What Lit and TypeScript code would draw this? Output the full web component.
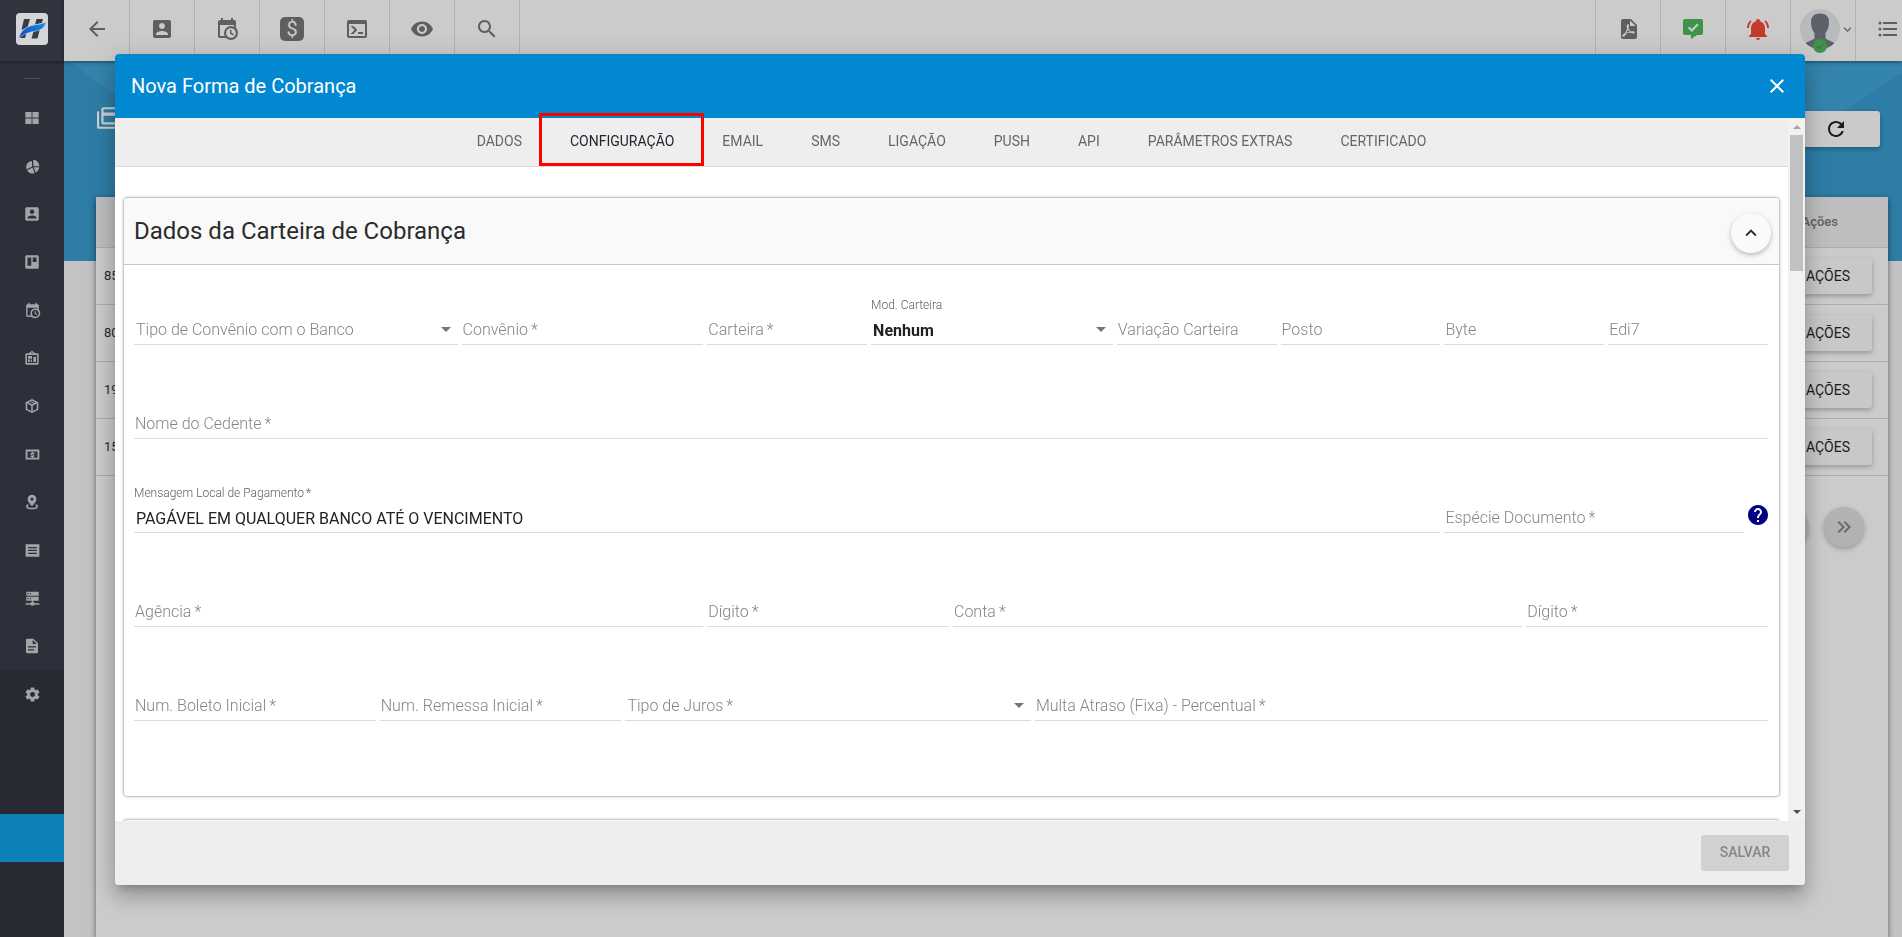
import { LitElement, html, css, nothing } from "lit";
import { customElement, property, state } from "lit/decorators.js";
import { classMap } from "lit/directives/class-map.js";
import { styleMap } from "lit/directives/style-map.js";

const ICONS: Record<string, string> = {
  back: "M20 11H7.83l5.59-5.59L12 4l-8 8 8 8 1.41-1.41L7.83 13H20v-2z",
  account:
    "M3 5v14c0 1.1.89 2 2 2h14c1.1 0 2-.9 2-2V5c0-1.1-.9-2-2-2H5c-1.11 0-2 .9-2 2zm12 4c0 1.66-1.34 3-3 3s-3-1.34-3-3 1.34-3 3-3 3 1.34 3 3zm-9 8c0-2 4-3.1 6-3.1s6 1.1 6 3.1v1H6v-1z",
  calendar:
    "M15,13H16.5V15.82L18.94,17.23L18.19,18.53L15,16.69V13M19,8H5V19H9.67C9.24,18.09 9,17.07 9,16A7,7 0 0,1 16,9C17.07,9 18.09,9.24 19,9.67V8M5,21C3.89,21 3,20.1 3,19V5C3,3.89 3.89,3 5,3H6V1H8V3H16V1H18V3H19A2,2 0 0,1 21,5V11.1C22.24,12.36 23,14.09 23,16A7,7 0 0,1 16,23C14.09,23 12.36,22.24 11.1,21H5M16,11.15A4.85,4.85 0 0,0 11.15,16C11.15,18.68 13.32,20.85 16,20.85A4.85,4.85 0 0,0 20.85,16C20.85,13.32 18.68,11.15 16,11.15Z",
  console:
    "M20,19V7H4V19H20M20,3A2,2 0 0,1 22,5V19A2,2 0 0,1 20,21H4A2,2 0 0,1 2,19V5C2,3.89 2.9,3 4,3H20M13,17V15H18V17H13M9.58,13L5.57,9H8.4L11.7,12.3C12.09,12.69 12.09,13.33 11.7,13.72L8.42,17H5.59L9.58,13Z",
  eye: "M12 4.5C7 4.5 2.73 7.61 1 12c1.73 4.39 6 7.5 11 7.5s9.27-3.11 11-7.5c-1.73-4.39-6-7.5-11-7.5zM12 17c-2.76 0-5-2.24-5-5s2.24-5 5-5 5 2.24 5 5-2.24 5-5 5zm0-8c-1.66 0-3 1.34-3 3s1.34 3 3 3 3-1.34 3-3-1.34-3-3-3z",
  search:
    "M15.5 14h-.79l-.28-.27C15.41 12.59 16 11.11 16 9.5 16 5.91 13.09 3 9.5 3S3 5.91 3 9.5 5.91 16 9.5 16c1.61 0 3.09-.59 4.23-1.57l.27.28v.79l5 4.99L20.49 19l-4.99-5zm-6 0C7.01 14 5 11.99 5 9.5S7.01 5 9.5 5 14 7.01 14 9.5 11.99 14 9.5 14z",
  pdf: "M14,9H19.5L14,3.5V9M7,2H15L21,8V20A2,2 0 0,1 19,22H7C5.89,22 5,21.1 5,20V4A2,2 0 0,1 7,2M11.93,12.44C12.34,13.34 12.86,14.08 13.46,14.59L13.87,14.91C13,15.07 11.8,15.35 10.53,15.84V15.84L10.42,15.88L10.92,14.84C11.37,13.97 11.7,13.18 11.93,12.44M18.41,16.25C18.59,16.07 18.68,15.84 18.69,15.59C18.72,15.39 18.67,15.2 18.57,15.04C18.28,14.57 17.53,14.35 16.29,14.35L15,14.42L14.13,13.84C13.5,13.32 12.93,12.41 12.53,11.28L12.57,11.14C12.9,9.81 13.21,8.2 12.55,7.54C12.39,7.38 12.17,7.3 11.94,7.3H11.7C11.33,7.3 11,7.69 10.91,8.07C10.54,9.4 10.76,10.13 11.13,11.34V11.35C10.88,12.23 10.56,13.25 10.05,14.28L9.09,16.08L8.2,16.57C7,17.32 6.43,18.16 6.32,18.69C6.28,18.88 6.3,19.05 6.37,19.23L6.4,19.28L6.88,19.59L7.32,19.7C8.13,19.7 9.05,18.75 10.29,16.63L10.47,16.56C11.5,16.23 12.78,16 14.5,15.81C15.53,16.32 16.74,16.55 17.5,16.55C17.94,16.55 18.24,16.44 18.41,16.25Z",
  message:
    "M4 2h16a2 2 0 0 1 2 2v12a2 2 0 0 1-2 2h-4l-6 4v-4H4a2 2 0 0 1-2-2V4a2 2 0 0 1 2-2zM10.9 14.9L17.6 8.1 16.1 6.6 10.9 11.9 8.4 9.4 6.9 10.9z",
  bell: "M21,19V20H3V19L5,17V11C5,7.9 7.03,5.17 10,4.29C10,4.19 10,4.1 10,4A2,2 0 0,1 12,2A2,2 0 0,1 14,4C14,4.1 14,4.19 14,4.29C16.97,5.17 19,7.9 19,11V17L21,19M14,21A2,2 0 0,1 12,23A2,2 0 0,1 10,21M19.75,3.19L18.33,4.61C20.04,6.3 21,8.6 21,11H23C23,8.07 21.84,5.25 19.75,3.19M1,11H3C3,8.6 3.96,6.3 5.67,4.61L4.25,3.19C2.16,5.25 1,8.07 1,11Z",
  list: "M7 5h14v2H7zM7 11h14v2H7zM7 17h14v2H7zM4 4.5A1.5 1.5 0 1 1 4 7.5 1.5 1.5 0 0 1 4 4.5zM4 10.5A1.5 1.5 0 1 1 4 13.5 1.5 1.5 0 0 1 4 10.5zM4 16.5A1.5 1.5 0 1 1 4 19.5 1.5 1.5 0 0 1 4 16.5z",
  refresh:
    "M17.65 6.35C16.2 4.9 14.21 4 12 4c-4.42 0-7.99 3.58-7.99 8s3.57 8 7.99 8c3.73 0 6.84-2.55 7.73-6h-2.08c-.82 2.33-3.04 4-5.65 4-3.31 0-6-2.69-6-6s2.69-6 6-6c1.66 0 3.14.69 4.22 1.78L13 11h7V4l-2.35 2.35z",
  close:
    "M19 6.41L17.59 5 12 10.59 6.41 5 5 6.41 10.59 12 5 17.59 6.41 19 12 13.41 17.59 19 19 17.59 13.41 12z",
  help: "M12 2C6.48 2 2 6.48 2 12s4.48 10 10 10 10-4.48 10-10S17.52 2 12 2zm1 17h-2v-2h2v2zm2.07-7.75l-.9.92C13.45 12.9 13 13.5 13 15h-2v-.5c0-1.1.45-2.1 1.17-2.83l1.24-1.26c.37-.36.59-.86.59-1.41 0-1.1-.9-2-2-2s-2 .9-2 2H8c0-2.21 1.79-4 4-4s4 1.79 4 4c0 .88-.36 1.68-.93 2.25z",
  up: "M12 8l-6 6 1.41 1.41L12 10.83l4.59 4.58L18 14z",
  down: "M7.41 8.59L12 13.17l4.59-4.58L18 10l-6 6-6-6z",
  first: "M18.41 7.41L17 6l-6 6 6 6 1.41-1.41L13.83 12zM12.41 7.41L11 6l-6 6 6 6 1.41-1.41L7.83 12z",
  last: "M5.59 7.41L7 6l6 6-6 6-1.41-1.41L10.17 12zM11.59 7.41L13 6l6 6-6 6-1.41-1.41L16.17 12z",
  cards:
    "M20 2H6a2 2 0 0 0-2 2v12a2 2 0 0 0 2 2h16V4a2 2 0 0 0-2-2zm0 14H6v-6h16v6zM22 7H6V4h16v3zM2 6H0v14a2 2 0 0 0 2 2h18v-2H2z",
  grid: "M2 3h9.4v8.4H2zM12.6 3H22v8.4h-9.4zM2 12.6h9.4V21H2zM12.6 12.6H22V21h-9.4z",
  pie: "M13.200 1A10.500 10.500 0 0 1 23 11.500H13.200zM11.200 3v9.200L2.600 16.400A9.800 9.800 0 0 1 11.200 3zM12 13.400l3.600 8.800A9.900 9.900 0 0 1 3.400 17.800zM13.800 13.200H22.600A9.800 9.800 0 0 1 17.200 21.500z",
  board:
    "M19,3H5C3.89,3 3,3.89 3,5V19A2,2 0 0,0 5,21H19A2,2 0 0,0 21,19V5C21,3.89 20.1,3 19,3M11,17H6V6H11V17M18,12H13V6H18V12Z",
  badge:
    "M12 1l5 4h3a2 2 0 0 1 2 2v13a2 2 0 0 1-2 2H4a2 2 0 0 1-2-2V7a2 2 0 0 1 2-2h3zM12 3.400L10 5h4zM4.400 7.400v12.200h15.200V7.400zM6 9h6v4H6zM6 14.400h3V18H6zM10.200 14.400H12V18h-1.800zM14 10h4v8h-4z",
  box: "M12 1.500l9.500 4.800v11.400L12 22.500 2.500 17.700V6.300zM12 4L6.800 6.600 12 9.200l5.200-2.600zM4.800 8.400v8l6.100 3.100v-8zM19.200 8.400l-6.100 3.100v8l6.100-3.100zM9 4.400l6.500 3.200-1.200.8-6.600-3.200z",
  cash: "M2 4h20a1 1 0 0 1 1 1v14a1 1 0 0 1-1 1H2a1 1 0 0 1-1-1V5a1 1 0 0 1 1-1zM4 7v10h16V7zM11 8h2v1h2v2h-4v1h3a1 1 0 0 1 1 1v2a1 1 0 0 1-1 1h-1v1h-2v-1H9v-2h4v-1h-3a1 1 0 0 1-1-1v-2a1 1 0 0 1 1-1h1z",
  pin: "M12 1a6.600 6.600 0 0 1 6.600 6.600C18.600 12.500 12 18.500 12 18.500S5.400 12.500 5.400 7.600A6.600 6.600 0 0 1 12 1zM12 5.200A2.400 2.400 0 1 0 12 10A2.400 2.400 0 0 0 12 5.200zM6 15.500C4 16 3 17.200 3 18.600 3 21.400 7 23 12 23s9-1.600 9-4.400c0-1.400-1-2.600-3-3.100l-1.200 1.800c1.400.3 2 .9 2 1.400 0 1.200-2.800 2.100-6.800 2.100s-6.800-.9-6.800-2.100c0-.5.6-1.100 2-1.400z",
  lines: "M1 2h22v20H1zM5 6.200v2h14v-2zM5 10.900v2h14v-2zM5 15.600v2h14v-2z",
  server:
    "M2 1h20v6.500H2zM4 3.200v2h2v-2zM8 3.200v2h1.500v-2zM2 9h20v6.500H2zM4 11.200v2h2v-2zM8 11.200v2h1.500v-2zM11 15.500h2V18h2v1.500h8v2.500h-8l-1 1h-4l-1-1H1v-2.500h8V18h2z",
  doc: "M5 1h9l7 7v13a2 2 0 0 1-2 2H5a2 2 0 0 1-2-2V3a2 2 0 0 1 2-2zM13 3v6h6zM6 12.500v1.800h12v-1.800zM6 17v1.800h9V17z",
  gear: "M12,15.5A3.5,3.5 0 0,1 8.5,12A3.5,3.5 0 0,1 12,8.5A3.5,3.5 0 0,1 15.5,12A3.5,3.5 0 0,1 12,15.5M19.43,12.97C19.47,12.65 19.5,12.33 19.5,12C19.5,11.67 19.47,11.34 19.43,11L21.54,9.37C21.73,9.22 21.78,8.95 21.66,8.73L19.66,5.27C19.54,5.05 19.27,4.96 19.05,5.05L16.56,6.05C16.04,5.66 15.5,5.32 14.87,5.07L14.5,2.42C14.46,2.18 14.25,2 14,2H10C9.75,2 9.54,2.18 9.5,2.42L9.13,5.07C8.5,5.32 7.96,5.66 7.44,6.05L4.95,5.05C4.73,4.96 4.46,5.05 4.34,5.27L2.34,8.73C2.21,8.95 2.27,9.22 2.46,9.37L4.57,11C4.53,11.34 4.5,11.67 4.5,12C4.5,12.33 4.53,12.65 4.57,12.97L2.46,14.63C2.27,14.78 2.21,15.05 2.34,15.27L4.34,18.73C4.46,18.95 4.73,19.03 4.95,18.95L7.44,17.94C7.96,18.34 8.5,18.68 9.13,18.93L9.5,21.58C9.54,21.82 9.75,22 10,22H14C14.25,22 14.46,21.82 14.5,21.58L14.87,18.93C15.5,18.67 16.04,18.34 16.56,17.94L19.05,18.95C19.27,19.03 19.54,18.95 19.66,18.73L21.66,15.27C21.78,15.05 21.73,14.78 21.54,14.63L19.43,12.97Z",
};

const icon = (name: string, size = 24) =>
  html`<svg width=${size} height=${size} viewBox="0 0 24 24" aria-hidden="true">
    <path fill="currentColor" fill-rule="evenodd" d=${ICONS[name]} />
  </svg>`;

const reset = css`
  :host {
    font-family: Roboto, "Liberation Sans", sans-serif;
    box-sizing: border-box;
  }
  *,
  *::before,
  *::after {
    box-sizing: border-box;
  }
  svg {
    display: block;
    flex: none;
  }
  button,
  input,
  select {
    font-family: inherit;
    border: 0;
    margin: 0;
    padding: 0;
    background: none;
    color: inherit;
  }
`;

@customElement("app-sidebar")
export class AppSidebar extends LitElement {
  static styles = [
    reset,
    css`
      :host {
        display: flex;
        flex-direction: column;
        background: #2d2f3b;
        color: #a3a4a8;
      }
      .brand {
        display: flex;
        justify-content: center;
        height: 61px;
        padding-top: 13px;
        background: #32353f;
        box-shadow: 0 1px 3px rgba(0, 0, 0, 0.4);
      }
      .dash {
        width: 16px;
        height: 1px;
        margin: 17px auto 15px;
        background: #4a4c57;
      }
      .item {
        display: flex;
        align-items: center;
        justify-content: center;
        height: 48px;
        color: inherit;
      }
      .bottom {
        flex: 1;
        background: #272a32;
      }
      .active {
        background: #0d80b8;
      }
    `,
  ];

  render() {
    const top: [string, string, number][] = [
      ["grid", "Painel", 16],
      ["pie", "Relatórios", 15],
      ["account", "Clientes", 18],
      ["board", "Quadros", 18],
      ["calendar", "Agenda", 17],
      ["badge", "Empresa", 16],
      ["box", "Produtos", 16],
      ["cash", "Financeiro", 15],
      ["pin", "Mapa", 16],
      ["lines", "Listas", 15],
      ["server", "Servidores", 15],
      ["doc", "Documentos", 16],
    ];
    return html`
      <div class="brand">
        <svg width="32" height="32" viewBox="0 0 32 32" aria-hidden="true">
          <defs>
            <linearGradient id="swoosh" x1="0" y1="1" x2="1" y2="0">
              <stop offset="0" stop-color="#0a3fd0" />
              <stop offset="1" stop-color="#0c9be0" />
            </linearGradient>
          </defs>
          <rect width="32" height="32" rx="4" fill="#d3d5d8" />
          <path fill="#3a3b3f" d="M8 6h6l-2.600 8.500-5.900 2.500zM20.500 6H27l-1.200 4-6.800 1.800zM4 25l1.500-4.500L11 18.500 9 25zM18 16.500l6.500-2.700-3 11.700h-6z" />
          <path fill="url(#swoosh)" stroke="#d3d5d8" stroke-width=".6" d="M2.500 26C4.500 17.500 10 13.500 18 12c4.500-.8 9-1.400 12-3.100-1 5.500-4.500 8-11 9.300C11 19.800 6 21.500 2.500 26z" />
        </svg>
      </div>
      <div class="dash"></div>
      <nav>
        ${top.map(([i, l, size]) => html`<a class="item" href="#" aria-label=${l}>${icon(i, size)}</a>`)}
      </nav>
      <nav class="bottom">
        <a class="item" href="#" aria-label="Configurações">${icon("gear", 17)}</a>
        <a class="item" href="#" aria-label="Geral"></a>
        <a class="item" href="#" aria-label="Cadastros"></a>
        <a class="item active" href="#" aria-label="Formas de cobrança"></a>
      </nav>
    `;
  }
}

@customElement("app-topbar")
export class AppTopbar extends LitElement {
  static styles = [
    reset,
    css`
      :host {
        display: flex;
        height: 61px;
        padding-left: 1px;
        background: #cbcbcb;
        color: #5f5f5f;
        box-shadow: 0 1px 4px rgba(0, 0, 0, 0.5);
        z-index: 1;
      }
      .cell {
        display: flex;
        align-items: center;
        justify-content: center;
        width: 65px;
        padding-bottom: 3px;
        border-right: 1px solid #b1b1b1;
      }
      .right {
        border-right: 0;
        border-left: 1px solid #b1b1b1;
      }
      .spacer {
        flex: 1;
      }
      .menu {
        justify-content: flex-start;
        width: 47px;
        padding-left: 20px;
      }
      .green {
        color: #3f9347;
      }
      .red {
        color: #c5392f;
      }
      .money {
        display: flex;
        align-items: center;
        justify-content: center;
        width: 24px;
        height: 24px;
        border-radius: 5px;
        background: #5f5f5f;
        color: #cbcbcb;
        font-size: 20px;
        line-height: 24px;
      }
      .user {
        justify-content: flex-start;
        padding-left: 9px;
      }
    `,
  ];

  render() {
    const cell = (name: string, label: string, extra = "") =>
      html`<button class="cell ${extra}" aria-label=${label}>${icon(name)}</button>`;
    return html`
      ${cell("back", "Voltar")} ${cell("account", "Clientes")} ${cell("calendar", "Agenda")}
      <button class="cell" aria-label="Financeiro"><span class="money">$</span></button>
      ${cell("console", "Terminal")} ${cell("eye", "Visualizar")} ${cell("search", "Buscar")}
      <div class="spacer"></div>
      ${cell("pdf", "PDF", "right")} ${cell("message", "Mensagens", "right green")}
      ${cell("bell", "Alertas", "right red")}
      <button class="cell right user" aria-label="Usuário">
        <svg width="40" height="48" viewBox="0 0 40 48" aria-hidden="true">
          <circle cx="20" cy="24" r="20" fill="#b9babd" />
          <path fill="#5d6169" d="M20 8.500c6 0 9 3 9 8.500 0 4-.8 8-3.500 11v5.500c3 2 6.500 3 9 4.500A20 20 0 0 1 5.500 38c2.500-1.500 6-2.500 9-4.500V28c-2.700-3-3.500-7-3.500-11 0-5.500 3-8.500 9-8.500z" />
          <circle cx="20" cy="41" r="7" fill="#3f9347" />
          <path d="M16.500 41l2.500 2.500 4.500-4.500" fill="none" stroke="#4f6b55" stroke-width="1.500" />
        </svg>
        ${icon("down", 15)}
      </button>
      ${cell("list", "Menu", "right menu")}
    `;
  }
}

@customElement("charge-list")
export class ChargeList extends LitElement {
  static styles = [
    reset,
    css`
      :host {
        display: flex;
        flex-direction: column;
        position: relative;
        background: #c3c3c3;
      }
      .hero {
        position: absolute;
        top: 0;
        left: 0;
        width: 100%;
        height: 200px;
      }
      .bar {
        display: flex;
        position: relative;
        justify-content: space-between;
        align-items: flex-start;
        height: 136px;
        padding: 44px 22px 0 33px;
        color: #cfcfcf;
      }
      .refresh {
        display: flex;
        align-items: center;
        justify-content: center;
        width: 88px;
        height: 36px;
        margin-top: 6px;
        border-radius: 3px;
        background: #cacaca;
        color: #1b1b1b;
        box-shadow: 0 2px 5px rgba(0, 0, 0, 0.26);
      }
      .sheet {
        position: relative;
        flex: 1;
        margin: 0 14px 0 32px;
        background: #cbcbcb;
        box-shadow: 0 2px 6px rgba(0, 0, 0, 0.5);
      }
      table {
        width: 100%;
        border-collapse: collapse;
      }
      th {
        height: 50px;
        padding: 0 50px 0 8px;
        background: #bebebe;
        color: #626262;
        font-size: 13px;
        font-weight: 500;
        text-align: left;
      }
      td {
        height: 57px;
        padding: 0 16px 0 8px;
        color: #272727;
        font-size: 13px;
      }
      tr {
        border-bottom: 1px solid #adadad;
      }
      .end {
        text-align: right;
      }
      .action {
        height: 36px;
        padding: 0 22px;
        border-radius: 3px;
        background: #c8c8c8;
        color: #1b1b1b;
        font-size: 14px;
        box-shadow: 0 2px 5px rgba(0, 0, 0, 0.26);
      }
      .pager {
        display: flex;
        justify-content: flex-end;
        gap: 16px;
        padding: 31px 24px;
      }
      .round {
        display: flex;
        align-items: center;
        justify-content: center;
        width: 40px;
        height: 40px;
        border-radius: 50%;
        background: #b2b2b2;
        color: #6c6c6c;
        box-shadow: 0 2px 5px rgba(0, 0, 0, 0.26);
      }
    `,
  ];

  render() {
    return html`
      <svg class="hero" viewBox="0 0 1838 200" preserveAspectRatio="none" aria-hidden="true">
        <rect width="1838" height="200" fill="#2d7da6" />
        <path d="M4 0H1838V12L1780 50 1400 130H190z" fill="#3384ae" />
      </svg>
      <div class="bar">
        ${icon("cards", 26)}
        <button class="refresh" aria-label="Atualizar">${icon("refresh")}</button>
      </div>
      <section class="sheet">
        <table>
          <thead>
            <tr>
              <th></th>
              <th class="end">Ações</th>
            </tr>
          </thead>
          <tbody>
            ${["85", "80", "19", "15"].map(
              (id) => html`<tr>
                <td>${id}</td>
                <td class="end"><button class="action">AÇÕES</button></td>
              </tr>`,
            )}
          </tbody>
        </table>
        <div class="pager">
          <button class="round" aria-label="Primeira página">${icon("first")}</button>
          <button class="round" aria-label="Última página">${icon("last")}</button>
        </div>
      </section>
    `;
  }
}

interface Field {
  id: string;
  label: string;
  span: number;
  required?: boolean;
  value?: string;
  kind?: "select";
  help?: boolean;
}

const ROWS: Field[][] = [
  [
    { id: "tipo-convenio", label: "Tipo de Convênio com o Banco", span: 4, kind: "select" },
    { id: "convenio", label: "Convênio", span: 3, required: true },
    { id: "carteira", label: "Carteira", span: 2, required: true },
    { id: "mod-carteira", label: "Mod. Carteira", span: 3, kind: "select", value: "Nenhum" },
    { id: "variacao", label: "Variação Carteira", span: 2 },
    { id: "posto", label: "Posto", span: 2 },
    { id: "byte", label: "Byte", span: 2 },
    { id: "edi7", label: "Edi7", span: 2 },
  ],
  [{ id: "cedente", label: "Nome do Cedente", span: 20, required: true }],
  [
    {
      id: "mensagem",
      label: "Mensagem Local de Pagamento",
      span: 16,
      required: true,
      value: "PAGÁVEL EM QUALQUER BANCO ATÉ O VENCIMENTO",
    },
    { id: "especie", label: "Espécie Documento", span: 4, required: true, help: true },
  ],
  [
    { id: "agencia", label: "Agência", span: 7, required: true },
    { id: "agencia-digito", label: "Dígito", span: 3, required: true },
    { id: "conta", label: "Conta", span: 7, required: true },
    { id: "conta-digito", label: "Dígito", span: 3, required: true },
  ],
  [
    { id: "boleto", label: "Num. Boleto Inicial", span: 3, required: true },
    { id: "remessa", label: "Num. Remessa Inicial", span: 3, required: true },
    { id: "juros", label: "Tipo de Juros", span: 5, kind: "select", required: true },
    { id: "multa", label: "Multa Atraso (Fixa) - Percentual", span: 9, required: true },
  ],
];

@customElement("charge-dialog")
export class ChargeDialog extends LitElement {
  @property({ type: Array }) rows: Field[][] = ROWS;
  @state() private active = "CONFIGURAÇÃO";

  static styles = [
    reset,
    css`
      :host {
        display: flex;
        flex-direction: column;
        border-radius: 4px;
        background: #fff;
        box-shadow:
          0 7px 8px -4px rgba(0, 0, 0, 0.2),
          0 13px 19px 2px rgba(0, 0, 0, 0.14),
          0 5px 24px 4px rgba(0, 0, 0, 0.12);
      }
      .head {
        display: flex;
        align-items: center;
        justify-content: space-between;
        height: 64px;
        padding: 0 16px;
        border-radius: 4px 4px 0 0;
        background: #0288d1;
        color: #fff;
      }
      h2,
      h3 {
        margin: 0;
        font-weight: 400;
      }
      h2 {
        font-size: 20px;
      }
      h3 {
        font-size: 24px;
      }
      .view {
        display: flex;
        flex: 1;
        min-height: 0;
      }
      .main {
        display: flex;
        flex: 1;
        flex-direction: column;
        min-width: 0;
      }
      .tabs {
        display: flex;
        justify-content: center;
        height: 49px;
        border-bottom: 1px solid #dcdcdc;
        background: #eeeeee;
      }
      .tab {
        position: relative;
        padding: 0 24px 2px;
        color: #666666;
        font-size: 14px;
      }
      .current {
        color: #22252f;
      }
      .current::after {
        content: "";
        position: absolute;
        inset: -5px -6px 0 -7px;
        border: 3px solid #ff0000;
      }
      .content {
        display: flex;
        flex: 1;
        flex-direction: column;
        gap: 22px;
        min-height: 0;
        overflow: hidden;
        padding: 30px 8px 0;
      }
      .card {
        flex: none;
        border: 1px solid #c8c8c8;
        border-radius: 4px;
        box-shadow: 0 0 3px rgba(0, 0, 0, 0.2);
      }
      .next {
        height: 68px;
        background: #f9f9f9;
      }
      .card-head {
        display: flex;
        align-items: center;
        justify-content: space-between;
        height: 67px;
        padding: 0 8px 0 10px;
        border-bottom: 1px solid #c8c8c8;
        border-radius: 4px 4px 0 0;
        background: #f9f9f9;
        color: #2b2b2b;
      }
      .fold {
        display: flex;
        align-items: center;
        justify-content: center;
        width: 40px;
        height: 40px;
        margin-top: 4px;
        border-radius: 50%;
        background: #fafafa;
        box-shadow: 0 2px 5px rgba(0, 0, 0, 0.26);
      }
      form {
        display: flex;
        flex-direction: column;
        gap: 46px;
        padding: 32px 7px 75px 10px;
      }
      .row {
        display: grid;
        grid-template-columns: repeat(20, minmax(0, 1fr));
      }
      .cell {
        display: flex;
        align-items: center;
        padding-right: 4px;
      }
      .field {
        display: grid;
        flex: 1;
        grid-template-rows: 17px 31px;
        grid-template-columns: minmax(0, 1fr) 24px;
        min-width: 0;
      }
      label {
        grid-area: 2 / 1;
        align-self: center;
        padding-left: 1px;
        color: #858585;
        font-size: 16px;
        font-weight: 300;
        line-height: 20px;
        white-space: nowrap;
        pointer-events: none;
      }
      .pick label {
        padding-left: 2px;
      }
      .field.filled label {
        grid-area: 1 / 1;
        align-self: start;
        padding-left: 0;
        color: #606060;
        font-size: 12px;
        line-height: 16px;
      }
      .star {
        margin-left: 3px;
      }
      .filled .star {
        margin-left: 2px;
      }
      input,
      select {
        grid-area: 2 / 1 / 3 / 3;
        width: 100%;
        padding: 2px 2px 0;
        border-bottom: 1px solid #dcdcdc;
        border-radius: 0;
        outline: 0;
        color: #212121;
        font-size: 16px;
        appearance: none;
      }
      select {
        font-weight: 700;
      }
      .caret {
        grid-area: 2 / 2;
        align-self: center;
        justify-self: center;
        border: 5px solid transparent;
        border-top-color: #757575;
        border-bottom: 0;
        pointer-events: none;
      }
      .help {
        align-self: flex-start;
        margin: 18px -2px 0 2px;
        color: #000080;
      }
      .scrollbar {
        display: flex;
        flex-direction: column;
        align-items: center;
        width: 17px;
        padding: 7px 0;
        background: #f1f1f1;
      }
      .arrow-up {
        border: 4px solid transparent;
        border-top: 0;
        border-bottom-color: #a3a3a3;
      }
      .arrow-down {
        margin-top: auto;
        border: 4px solid transparent;
        border-bottom: 0;
        border-top-color: #505050;
      }
      .thumb {
        width: 13px;
        height: 136px;
        margin-top: 6px;
        background: #c1c1c1;
      }
      .foot {
        display: flex;
        align-items: center;
        justify-content: flex-end;
        height: 64px;
        padding: 0 16px;
        border-radius: 0 0 4px 4px;
        background: #eeeeee;
      }
      .save {
        min-width: 88px;
        height: 36px;
        padding: 0 18px 2px;
        border-radius: 3px;
        background: #d1d1d1;
        color: #858585;
        font-size: 14px;
        font-weight: 500;
      }
    `,
  ];

  private field(f: Field) {
    const star = f.required ? html`<span class="star">*</span>` : nothing;
    const select = f.kind === "select";
    return html`<div class="cell" style=${styleMap({ gridColumn: `span ${f.span}` })}>
      <div class=${classMap({ field: true, filled: !!f.value, pick: select })}>
        ${select
          ? html`<select id=${f.id}>
                <option>${f.value ?? ""}</option>
              </select>
              <span class="caret"></span>`
          : html`<input id=${f.id} type="text" .value=${f.value ?? ""} />`}
        <label for=${f.id}>${f.label}${star}</label>
      </div>
      ${f.help ? html`<button type="button" class="help" aria-label="Ajuda">${icon("help")}</button>` : nothing}
    </div>`;
  }

  render() {
    const tabs = ["DADOS", "CONFIGURAÇÃO", "EMAIL", "SMS", "LIGAÇÃO", "PUSH", "API", "PARÂMETROS EXTRAS", "CERTIFICADO"];
    return html`
      <header class="head">
        <h2>Nova Forma de Cobrança</h2>
        <button aria-label="Fechar">${icon("close")}</button>
      </header>
      <div class="view">
        <div class="main">
          <div class="tabs" role="tablist">
            ${tabs.map(
              (t) => html`<button
                role="tab"
                class=${classMap({ tab: true, current: t === this.active })}
                aria-selected=${t === this.active}
                @click=${() => (this.active = t)}
              >
                ${t}
              </button>`,
            )}
          </div>
          <div class="content">
            <section class="card">
              <header class="card-head">
                <h3>Dados da Carteira de Cobrança</h3>
                <button class="fold" aria-label="Recolher">${icon("up", 22)}</button>
              </header>
              <form>${this.rows.map((r) => html`<div class="row">${r.map((f) => this.field(f))}</div>`)}</form>
            </section>
            <section class="card next"></section>
          </div>
        </div>
        <div class="scrollbar" aria-hidden="true">
          <span class="arrow-up"></span>
          <span class="thumb"></span>
          <span class="arrow-down"></span>
        </div>
      </div>
      <footer class="foot">
        <button class="save" disabled>SALVAR</button>
      </footer>
    `;
  }
}

@customElement("app-root")
export class AppRoot extends LitElement {
  static styles = [
    reset,
    css`
      :host {
        display: grid;
        grid-template-columns: 64px minmax(0, 1fr);
        min-height: 100vh;
      }
      .page {
        display: grid;
        grid-template-rows: auto minmax(0, 1fr);
      }
      .overlay {
        position: fixed;
        inset: 54px 97px 52px 115px;
        z-index: 10;
      }
    `,
  ];

  render() {
    return html`
      <app-sidebar></app-sidebar>
      <div class="page">
        <app-topbar></app-topbar>
        <charge-list></charge-list>
      </div>
      <charge-dialog class="overlay" role="dialog" aria-label="Nova Forma de Cobrança"></charge-dialog>
    `;
  }
}
